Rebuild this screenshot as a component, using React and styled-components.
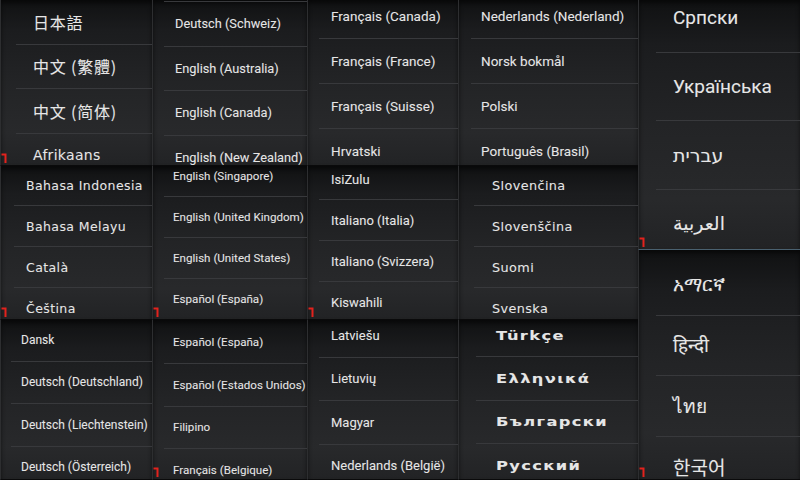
import React from "react";
import styled, { createGlobalStyle, css } from "styled-components";

const GlobalStyle = createGlobalStyle`
  html, body {
    margin: 0;
    padding: 0;
    background: #0b0b0c;
  }
  #root {
    width: 800px;
    height: 480px;
    overflow: hidden;
  }
`;

const fonts = {
  roboto: css`
    font-family: Roboto, "Noto Sans", "Liberation Sans", sans-serif;
  `,
  wide: css`
    font-family: "DejaVu Sans", "Noto Sans", sans-serif;
  `,
  cjk: css`
    font-family: "Noto Sans CJK TC", "Noto Sans CJK SC", "DejaVu Sans", sans-serif;
  `,
};

const Page = styled.div`
  display: flex;
  width: 800px;
  height: 480px;
  background: #0b0b0c;
`;

const Column = styled.div`
  display: flex;
  flex-direction: column;
  width: ${(p) => p.$w}px;
  flex: none;
`;

const Tile = styled.div`
  position: relative;
  height: ${(p) => p.$h}px;
  flex: none;
  overflow: hidden;
  box-sizing: border-box;
  border-left: 1px solid #2d2e30;
  border-bottom: 1px solid ${(p) => (p.$edge ? "#4a6170" : "#0a0a0b")};
  background: linear-gradient(
    180deg,
    #101112 0%,
    #1b1c1e 18%,
    #232426 50%,
    #28292b 80%,
    #222325 100%
  );
  box-shadow: inset 0 3px 4px rgba(0, 0, 0, 0.55);
`;

const List = styled.div`
  margin-top: ${(p) => p.$offset}px;
  display: flex;
  flex-direction: column;
  ${(p) =>
    p.$topLine &&
    css`
      margin-left: ${p.$topLine}px;
      border-top: 1px solid #38393c;
      & > div {
        margin-left: 0;
      }
    `}
`;

const Row = styled.div`
  display: flex;
  align-items: center;
  height: ${(p) => p.$h}px;
  flex: none;
  box-sizing: border-box;
  margin-left: ${(p) => p.$inset}px;
  padding-left: ${(p) => p.$pad - p.$inset}px;
  border-bottom: 1px solid #38393c;
  white-space: nowrap;
  color: #e6e6e6;
  ${(p) => fonts[p.$font]};
  font-size: ${(p) => p.$size}px;
  letter-spacing: ${(p) => p.$ls || 0}px;
  font-weight: ${(p) => p.$weight || 400};
  text-shadow: 0 0 1px rgba(255, 255, 255, 0.15);
`;

const Label = styled.span`
  display: inline-block;
  transform: scaleX(${(p) => p.$stretch || 1});
  transform-origin: left center;
`;

const Mark = styled.svg`
  position: absolute;
  left: 0;
  bottom: 2px;
  width: 7px;
  height: 10px;
`;

const RedMark = () => (
  <Mark viewBox="0 0 7 10">
    <path d="M0.5 1.5 H4.5 V10" fill="none" stroke="#e3221d" strokeWidth="2" />
  </Mark>
);

const columns = [
  {
    w: 152,
    tiles: [
      {
        h: 166, offset: 0, rowH: 44.5, inset: 15, pad: 32, font: "cjk", size: 16, ls: 0.8, mark: true,
        items: [
          "日本語",
          "中文 (繁體)",
          "中文 (简体)",
          { t: "Afrikaans", font: "wide", size: 14, ls: 0.3 },
        ],
      },
      {
        h: 154, offset: -1, rowH: 41, inset: 13, pad: 25, font: "wide", size: 12.5, ls: 0.4, mark: true,
        items: ["Bahasa Indonesia", "Bahasa Melayu", "Català", "Čeština"],
      },
      {
        h: 160, offset: -1, rowH: 42.5, inset: 10, pad: 20, font: "roboto", size: 12,
        items: ["Dansk", "Deutsch (Deutschland)", "Deutsch (Liechtenstein)", "Deutsch (Österreich)"],
      },
    ],
  },
  {
    w: 155,
    tiles: [
      {
        h: 166, offset: 1, topLine: 11, rowH: 44.6, inset: 11, pad: 22, font: "roboto", size: 12.8,
        items: ["Deutsch (Schweiz)", "English (Australia)", "English (Canada)", "English (New Zealand)"],
      },
      {
        h: 154, offset: -10, rowH: 41, inset: 11, pad: 20, font: "roboto", size: 11.6, mark: true,
        items: ["English (Singapore)", "English (United Kingdom)", "English (United States)", "Español (España)"],
      },
      {
        h: 160, offset: 1, rowH: 42.8, inset: 11, pad: 20, font: "roboto", size: 11.6, mark: true,
        items: ["Español (España)", "Español (Estados Unidos)", "Filipino", "Français (Belgique)"],
      },
    ],
  },
  {
    w: 151,
    tiles: [
      {
        h: 166, offset: -6, rowH: 45, inset: 11, pad: 23, font: "roboto", size: 13.5,
        items: ["Français (Canada)", "Français (France)", "Français (Suisse)", "Hrvatski"],
      },
      {
        h: 154, offset: -7, rowH: 41, inset: 11, pad: 23, font: "roboto", size: 13, mark: true,
        items: ["IsiZulu", "Italiano (Italia)", "Italiano (Svizzera)", "Kiswahili"],
      },
      {
        h: 160, offset: -6, rowH: 43.5, inset: 11, pad: 23, font: "roboto", size: 13,
        items: ["Latviešu", "Lietuvių", "Magyar", "Nederlands (België)"],
      },
    ],
  },
  {
    w: 180,
    tiles: [
      {
        h: 166, offset: -6, rowH: 45, inset: 12, pad: 22, font: "roboto", size: 13.5,
        items: ["Nederlands (Nederland)", "Norsk bokmål", "Polski", "Português (Brasil)"],
      },
      {
        h: 154, offset: -1, rowH: 41, inset: 15, pad: 33, font: "wide", size: 12.8, ls: 0.4,
        items: ["Slovenčina", "Slovenščina", "Suomi", "Svenska"],
      },
      {
        h: 160, offset: -6, rowH: 43.3, inset: 17, pad: 37, font: "wide", size: 13, ls: 1.1, weight: 700, stretch: 1.25,
        items: ["Türkçe", "Ελληνικά", "Български", "Русский"],
      },
    ],
  },
  {
    w: 162,
    tiles: [
      {
        h: 250, offset: -16, rowH: 68.5, inset: 17, pad: 34, font: "roboto", size: 19, mark: true, edge: true,
        items: ["Српски", "Українська", { t: "עברית", font: "wide" }, { t: "العربية", font: "wide" }],
      },
      {
        h: 230, offset: 5, rowH: 60.5, inset: 17, pad: 34, font: "wide", size: 19, mark: true,
        items: ["አማርኛ", "हिन्दी", "ไทย", { t: "한국어", font: "cjk" }],
      },
    ],
  },
];

const App = () => {
  return (
    <>
      <GlobalStyle />
      <Page>
        {columns.map((col, ci) => (
          <Column key={ci} $w={col.w}>
            {col.tiles.map((tile, ti) => (
              <Tile key={ti} $h={tile.h} $edge={tile.edge}>
                <List $offset={tile.offset} $topLine={tile.topLine}>
                  {tile.items.map((item, ii) => {
                    const it = typeof item === "string" ? { t: item } : item;
                    return (
                      <Row
                        key={ii}
                        $h={tile.rowH}
                        $inset={tile.inset}
                        $pad={tile.topLine ? tile.pad - tile.topLine + tile.inset : tile.pad}
                        $font={it.font || tile.font}
                        $size={it.size || tile.size}
                        $ls={it.ls ?? tile.ls}
                        $weight={tile.weight}
                      >
                        <Label $stretch={tile.stretch}>{it.t}</Label>
                      </Row>
                    );
                  })}
                </List>
                {tile.mark && <RedMark />}
              </Tile>
            ))}
          </Column>
        ))}
      </Page>
    </>
  );
};

export default App;
